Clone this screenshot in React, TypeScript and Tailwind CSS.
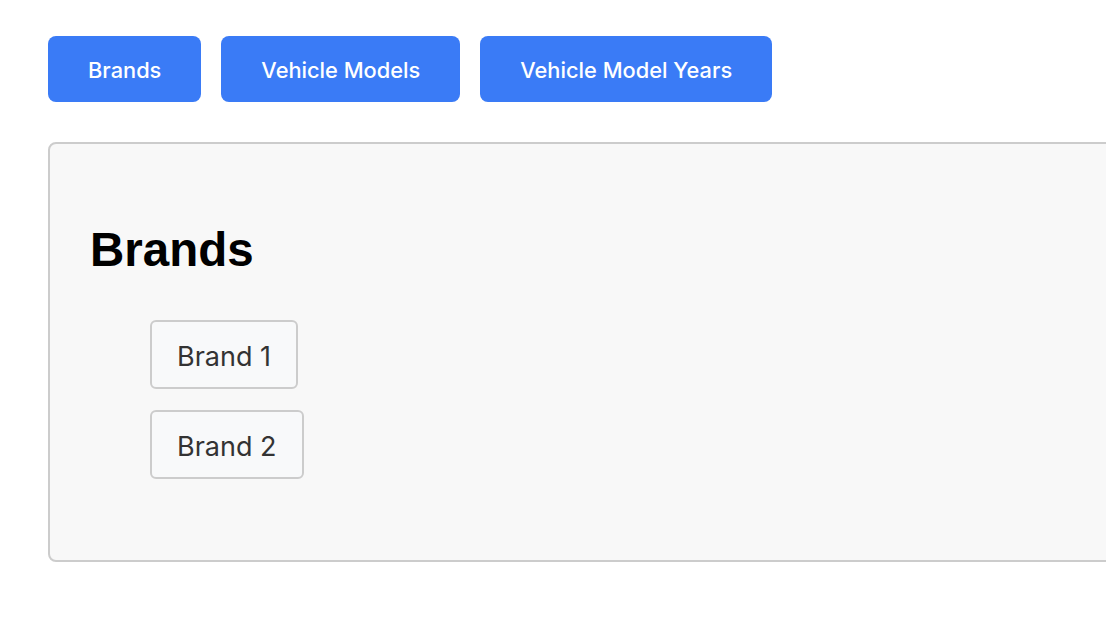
export default function App() {
  const tabs = ['Brands', 'Vehicle Models', 'Vehicle Model Years']
  const brands = ['Brand 1', 'Brand 2']

  return (
    <div className="min-h-screen w-full overflow-hidden bg-white pl-12 pt-9 font-['Inter',sans-serif]">
      {/* Tab buttons */}
      <div className="flex gap-5">
        {tabs.map((tab) => (
          <button
            key={tab}
            className="h-[66px] rounded-lg bg-[#3a7bf6] px-10 pt-[2px] text-[21.8px] font-medium text-white"
          >
            {tab}
          </button>
        ))}
      </div>

      {/* Panel */}
      <div className="mt-[40px] w-[1100px] rounded-lg border-2 border-[#cccccc] bg-[#f8f8f8] px-10 pt-[79px] pb-[81px]">
        <h1 className="font-['Liberation_Sans',Arial,sans-serif] text-[47.5px] font-bold leading-[54px] text-black">
          Brands
        </h1>
        <ul className="mt-[43px] flex flex-col items-start gap-[21px] pl-[60px]">
          {brands.map((b) => (
            <li
              key={b}
              className="rounded-md border-2 border-[#cccccc] bg-[#f8f9fa] px-[25px] pt-[18px] pb-[14px] text-[27px] leading-[33px] text-[#333333]"
            >
              {b}
            </li>
          ))}
        </ul>
      </div>
    </div>
  )
}
